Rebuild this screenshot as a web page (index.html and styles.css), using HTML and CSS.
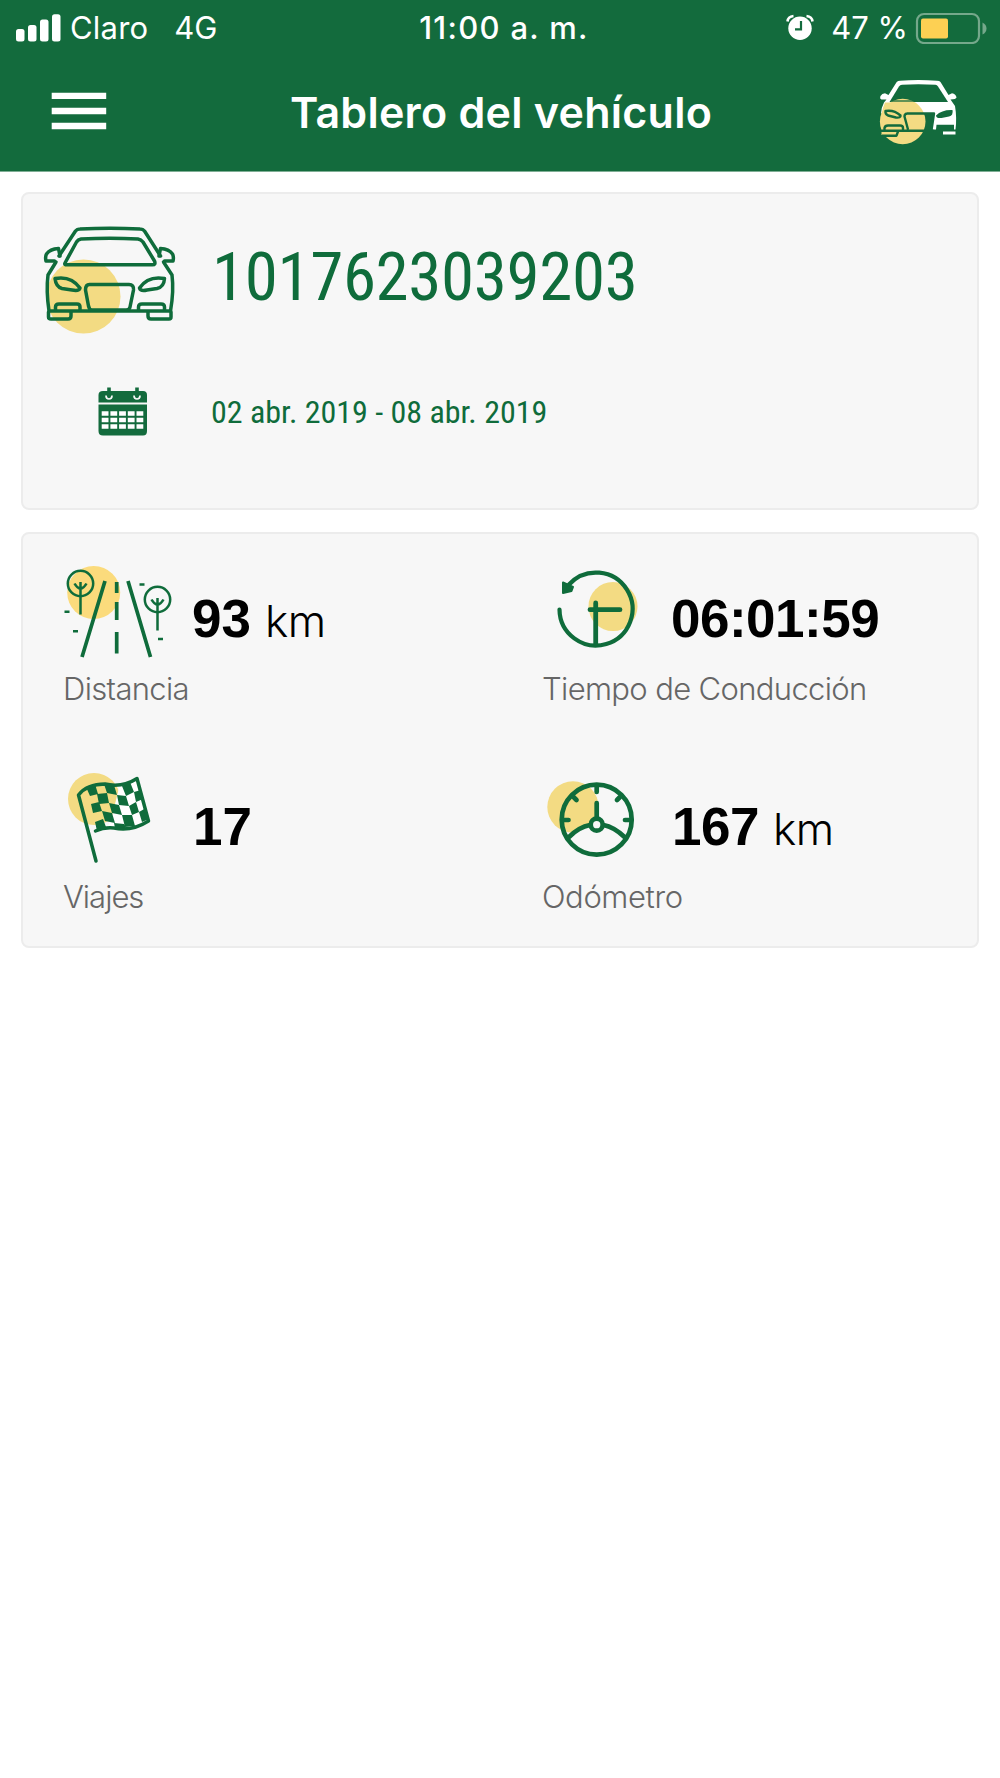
FILE: index.html
```html
<!DOCTYPE html>
<html lang="es">
<head>
<meta charset="utf-8">
<title>Tablero del vehículo</title>
<link rel="stylesheet" href="styles.css">
</head>
<body>
<header class="header">
  <div class="status">
    <div class="status-side">
      <svg class="signal" width="46" height="28" viewBox="15 13 46 28" fill="#fff"><rect x="16" y="28" width="8.5" height="12.5" rx="2.5"/><rect x="28" y="24" width="8.5" height="16.5" rx="2.5"/><rect x="40" y="18.500" width="8.500" height="22" rx="2.500"/><rect x="52" y="13.300" width="8.500" height="27.200" rx="2.500"/></svg>
      <span class="carrier">Claro</span>
      <span class="network">4G</span>
    </div>
    <div class="clock">11:00 a. m.</div>
    <div class="status-side status-right">
      <svg class="alarm" width="28" height="28" viewBox="788 13 28 28"><circle cx="802" cy="27.200" r="11.700" fill="#fff"/><path d="M789.500 20.500Q790 15.500 795.500 15M808.500 15Q814 15.500 814.500 20.500" fill="none" stroke="#fff" stroke-width="2.600"/><path d="M803 20v8.300h-6" fill="none" stroke="#136b3d" stroke-width="2.200"/></svg>
      <span class="percent">47 %</span>
      <svg width="72" height="32" viewBox="915 11 72 32"><rect x="917" y="13" width="62" height="29" rx="7" fill="none" stroke="#75a88b" stroke-width="2.200"/><rect x="921" y="17.500" width="27" height="20" rx="2" fill="#fdd053"/><path d="M982.500 21.500q4 2 4 6t-4 6z" fill="#75a88b"/></svg>
    </div>
  </div>
  <div class="nav">
    <svg class="menu" width="56" height="40" viewBox="51 91 56 40" fill="#fff"><path d="M51.700 92.700h54.500v6.300H51.700zM51.700 107.700h54.500v6.500H51.700zM51.700 122.700h54.500v6.500H51.700z"/></svg>
    <h1 class="title">Tablero del vehículo</h1>
    <svg class="nav-car" width="80" height="68" viewBox="879 78 80 68">
      <path fill="#fff" d="M896.700 82Q898 80.700 900 80.700Q918 79.500 937 80.700Q939.500 80.700 940.500 82L948.500 95L952 93.300Q956 94 956.500 97.500Q956 99.300 950.500 99.500L955 106Q957 118 955.500 129.500H954V124.700H936.500L936 129.500H931.500L934 113.500H881Q881.500 107 884 102.500L886.500 99.500H881.500Q879.500 99 880.500 96Q882 93.500 885 93.300L888.500 95Z"/>
      <path fill="#136b3d" d="M902 84.700Q918 83.700 935.500 84.700Q937 85 938 86.500L948 102H889.500L899 86.500Q900 85 902 84.700Z"/>
      <path fill="#136b3d" d="M936 115.500Q942 109.500 952.500 110Q953.500 115.500 949 116.500L941.500 118Q936 118.500 936 115.500Z"/>
      <path fill="#fff" d="M943 131.500H955.500V134.500H943Z"/>
      <path fill="#f3db83" d="M885 102.500H905V130H881.500Q880 113 885 102.500ZM881.500 131H896V135H881.500Z"/>
      <circle cx="902.700" cy="121.500" r="22.800" fill="#f3db83"/>
      <path d="M892 101H915" stroke="#136b3d" stroke-width="1.300"/>
      <path fill="none" stroke="#136b3d" stroke-width="2.400" stroke-linejoin="round" d="M885.500 111Q894 109.500 900.500 115.500Q901 118 896 117.500L888 115.500Q885 114 885.500 111ZM907 113.500H934L931.500 130M907 113.500Q904.500 114 904.500 116.500L908 129.500M884.500 130V128Q885 125.500 888 125.500H900Q903 125.500 903 128V130M881 130.700H933.500M898 131.500L896.500 135.700H882"/>
    </svg>
  </div>
</header>
<main class="content">
  <section class="card summary">
    <div class="vehicle">
      <svg width="140" height="114" viewBox="40 223 140 114">
        <circle cx="83.500" cy="296.500" r="37" fill="#f3db83"/>
        <g fill="none" stroke="#0f6c3b" stroke-width="3.500" stroke-linejoin="round" stroke-linecap="round">
          <path d="M59 256L75.500 231Q77 229 80 229Q110 227.500 140 229Q143 229 144.500 231L160.500 256"/>
          <path d="M65 263L76.500 242Q78 239.500 81 239Q110 237.500 138 239Q141 239.500 143 242L154.500 261Q156 264.800 152.500 264.800H67Q64 264.800 65 263Z"/>
          <path d="M60 256L58.500 248.500Q50 249 46.500 254Q45 257 46 261H54.500M159 256L160.500 248.500Q169 249 172.500 254Q174 257 173 261H164.500"/>
          <path d="M56 262L48 275Q46 291 49 311H170.500Q174 291 172 275L163.500 262"/>
          <path d="M55 278.500Q71 275.500 80 288Q79 291.500 72 290L62 288.500Q56 287 55 278.500ZM164.500 278.500Q148 275.500 139.500 288Q140.500 291.500 147 290L157 288.500Q164 287 164.500 278.500Z"/>
          <path d="M89.500 284.500H129Q134 284.500 133.500 290L130 307Q129.500 310 126 310H92Q89.500 310 88.500 306L85.500 290Q85.500 284.500 89.500 284.500ZM55.500 310V307Q55.500 304 59 304H77Q80 304 80 307V310M138.500 310V307Q138.500 304 142 304H161Q164.500 304 164.500 307V310"/>
          <path d="M48.500 312V317Q48.500 319 51 319H68Q71 319 71 316V312M148 312V316Q148 319 151 319H169Q171 319 171 317V312"/>
        </g>
      </svg>
      <div class="vehicle-id">1017623039203</div>
    </div>
    <div class="period">
      <svg width="52" height="52" viewBox="97 385 52 52"><path fill="#136b3d" d="M103 391H143Q147 391 147 395V402.500H98.500V395Q98.500 391 103 391ZM98.500 404.500H147V431Q147 435.500 143 435.500H103Q98.500 435.500 98.500 431Z"/><path d="M109 387.500V396M137 387.500V396" stroke="#136b3d" stroke-width="3.600"/><path d="M106 395.500Q106 399 109 399T112 395.500M134 395.500Q134 399 137 399T140 395.500" stroke="#f7f7f7" stroke-width="1.700" fill="none"/><path fill="none" stroke="#fff" stroke-width="4.600" stroke-dasharray="6.800 1.900" d="M101.700 413.500H143.500M101.700 420H143.500M101.700 426.500H143.500"/></svg>
      <div class="dates">02 abr. 2019 - 08 abr. 2019</div>
    </div>
  </section>
  <section class="card metrics">
    <div class="metric">
      <div class="reading">
        <svg width="140" height="105" viewBox="50 560 140 105">
          <circle cx="93.700" cy="592.500" r="26.500" fill="#fbdb7c"/>
          <g fill="none" stroke="#0f6c3b" stroke-width="2.500"><circle cx="80.500" cy="583.500" r="12.700"/><circle cx="157.500" cy="599.500" r="12.700"/><path d="M80.500 582V614.500M74.500 583.500Q77 588 80.500 589Q84 588 86.500 583.500M157.500 598V630.500M151.500 599.500Q154 604 157.500 605Q161 604 163.500 599.500"/><path d="M64.500 611.700h5M73 631.300h5M139.500 584.500h5M158 639h5"/><path stroke-width="3.700" d="M105 581L82 657M128 581L150.500 657M116.700 582V593M116.700 602V620M116.700 632V653.500"/></g>
        </svg>
        <strong class="value">93</strong><span class="unit">km</span>
      </div>
      <div class="label">Distancia</div>
    </div>
    <div class="metric">
      <div class="reading">
        <svg width="140" height="105" viewBox="529 560 140 105">
          <circle cx="613" cy="606.500" r="24.500" fill="#f3db83"/>
          <path d="M559.500 609.500A36.500 36.500 0 1 0 569 584.500" fill="none" stroke="#0f6c3b" stroke-width="4.200" stroke-linecap="round"/><path fill="#0f6c3b" stroke="#0f6c3b" stroke-width="2" stroke-linejoin="round" d="M563 582.500L573 587L571.500 591L563 593Z"/><path d="M595.700 603V644M590 609.700H620" stroke="#0f6c3b" stroke-width="4.800" stroke-linecap="round"/>
        </svg>
        <strong class="value value-time">06:01:59</strong>
      </div>
      <div class="label label-time">Tiempo de Conducción</div>
    </div>
    <div class="metric">
      <div class="reading">
        <svg width="140" height="105" viewBox="50 768 140 105">
          <circle cx="94" cy="799" r="26" fill="#f3db83"/>
          <path fill="#fff" d="M119 788L137 779L148 820L128 829L108 826L112 816Z"/>
          <g fill="#0f6c3b"><path d="M86 787L95 784L98 794L90 796ZM104 784L114 785L117 795L107 793ZM122 786L130 782L134 792L126 796ZM97 794L107 793L109 803L99 804ZM117 795L126 796L129 806L119 805ZM134 792L141 790L143 799L136 802ZM91 804L99 802L102 811L93 813ZM109 803L119 805L122 815L112 813ZM129 806L136 802L139 812L132 815ZM102 811L112 813L115 823L105 821ZM122 815L132 815L135 826L125 827ZM139 812L146 808L149 819L142 822ZM95 822L103 819L106 827L97 831ZM114 823L124 824L126 829L115 828Z"/></g>
          <path fill="none" stroke="#0f6c3b" stroke-width="3.500" stroke-linecap="round" stroke-linejoin="round" d="M96 861L78.500 795Q87 784 105 784Q122 788 137 778.500L148.500 821Q131 832 114 828Q104 827 95.500 831"/>
        </svg>
        <strong class="value value-trips">17</strong>
      </div>
      <div class="label label-trips">Viajes</div>
    </div>
    <div class="metric">
      <div class="reading">
        <svg width="140" height="105" viewBox="529 768 140 105">
          <circle cx="573" cy="807" r="25.700" fill="#f3db83"/>
          <path fill="#f7f7f7" d="M569 837Q580 825 592 823V827Q606 835 608 825L624 838A35 35 0 0 1 569 837Z"/>
          <g fill="none" stroke="#0f6c3b" stroke-width="4.700" stroke-linecap="round"><circle cx="596.700" cy="819.700" r="35"/><path d="M596.700 786V792M573.500 797L576.500 800M620 797L617 800M563 820H568.500M630.500 820H625M596.700 803V817M569 837Q579 827 590 825M624.500 837Q614 827 603.500 825"/><circle cx="596.700" cy="824.700" r="6" fill="#f7f7f7"/></g>
        </svg>
        <strong class="value value-odo">167</strong><span class="unit">km</span>
      </div>
      <div class="label label-odo">Odómetro</div>
    </div>
  </section>
</main>
</body>
</html>
```
FILE: styles.css
```css
* { box-sizing: border-box; }
body { margin: 0; min-height: 1778px; background: #fff; font-family: "Liberation Sans", sans-serif; }
svg { display: block; flex: none; }

.header { height: 172px; background: #136b3d; color: #fff; font-family: Inter, sans-serif; border-bottom: 1px solid #7fae95; }
.status { height: 54px; display: grid; grid-template-columns: 1fr auto 1fr; align-items: center; padding: 0 13px 0 15px; font-size: 31px; line-height: 54px; white-space: nowrap; }
.status span, .clock { padding-top: 1px; }
.status-side { display: flex; align-items: center; }
.status-right { justify-content: flex-end; }
.carrier { margin-left: 9px; letter-spacing: .2px; }
.network { margin-left: 26px; }
.clock { margin-left: 6px; font-weight: 500; font-size: 31px; letter-spacing: 1.3px; }
.percent { margin: 0 7px 0 17px; letter-spacing: 0; }
.nav { height: 116px; display: flex; align-items: center; justify-content: space-between; padding: 0 41px 0 51px; }
.menu { margin-bottom: 2px; }
.title { margin: 0 0 0 16px; font-size: 43px; font-weight: 600; letter-spacing: .25px; line-height: 60px; white-space: nowrap; }

.content { padding: 20px 21px 0; display: grid; gap: 22px; }
.card { border: 2px solid #ececec; border-radius: 8px; background: #f7f7f7; }
.summary { height: 318px; padding: 29px 0 0 17px; color: #0f6c3b; font-family: "Roboto Condensed", Roboto, sans-serif; font-stretch: 75%; }
.vehicle { display: flex; }
.vehicle-id { margin-left: 32px; padding-top: 1px; font-size: 67px; letter-spacing: -.35px; line-height: 107px; }
.period { display: flex; align-items: center; padding: 47px 0 0 57px; }
.dates { margin-left: 62px; padding-top: 2px; font-size: 32px; line-height: 52px; }

.metrics { height: 416px; display: grid; grid-template-columns: 479px 1fr; grid-auto-rows: 208px; }
.metric { padding: 26px 0 0 27px; }
.reading { display: flex; align-items: baseline; height: 105px; white-space: nowrap; }
.reading svg { align-self: flex-start; }
.value { margin-left: 2px; font-size: 53px; line-height: 117px; }
.value-time { letter-spacing: -.5px; }
.value-trips { margin-left: 3px; }
.value-odo { margin-left: 3px; letter-spacing: -.5px; }
.unit { margin-left: 14px; font-family: Inter, sans-serif; font-weight: 300; font-size: 44px; letter-spacing: -.5px; }
.label { margin-left: 13px; padding-top: 1px; font-family: Inter, sans-serif; font-weight: 300; font-size: 31px; letter-spacing: -.65px; line-height: 46px; color: #666; }
.label-trips { letter-spacing: -1px; }
.label-odo { letter-spacing: -.4px; }
```
